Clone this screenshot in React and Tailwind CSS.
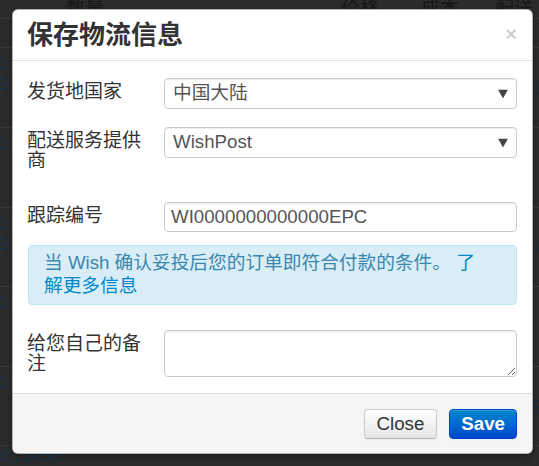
// 保存物流信息 modal over the (dimmed) order table
const rows = [
  { h: "h-[29px]", left: "", right: "" },
  { h: "h-[80px]", left: "01\n9", right: "3" },
  { h: "h-[80px]", left: "01", right: "" },
  { h: "h-[80px]", left: "01\n9", right: "7" },
  { h: "h-[80px]", left: "01", right: "" },
  { h: "h-[79px]", left: "01", right: "9" },
];

function Background() {
  return (
    <div className="flex flex-col bg-[#2b2b2b] h-[466px] w-[539px] overflow-hidden">
      <div className="h-[19px] border-b border-[#3a3a3a] flex items-end text-[19px] leading-[19px] text-[#161616]">
        <span className="ml-[66px]">数量</span>
        <span className="ml-auto">价格</span>
        <span className="ml-[42px]">成本</span>
        <span className="ml-[36px] mr-[6px]">配送</span>
      </div>
      {rows.map((r, i) => (
        <div key={i} className={`${r.h} border-b border-[#3a3a3a] flex justify-between pt-[6px] text-[19px] leading-[20px] text-[#1d3244]`}>
          <span className="whitespace-pre -ml-[2px]">{r.left}</span>
          <span className="mr-[-4px] mt-[24px] text-[#1f2a33]">{r.right}</span>
        </div>
      ))}
      <div className="text-[19px] leading-[20px] text-[#1d3244]">013456</div>
    </div>
  );
}

function Caret() {
  return (
    <svg width="10" height="9" viewBox="0 0 10 9" className="absolute right-[9px] top-1/2 -translate-y-1/2">
      <polygon points="0,0 10,0 5,9" fill="#444" />
    </svg>
  );
}

function Field({ label, children, className = "" }) {
  return (
    <div className={`flex ${className}`}>
      <label className="w-[137px] shrink-0 pr-[12px] pt-[4px] text-[19px] leading-[20px] text-[#333]">
        {label}
      </label>
      <div className="flex-1">{children}</div>
    </div>
  );
}

const control =
  "w-full bg-white border border-[#ccc] rounded-[4px] shadow-[inset_0_1px_1px_rgba(0,0,0,0.075)] text-[18.7px] text-[#555] outline-none";

export default function App() {
  return (
    <div className="relative w-[539px] h-[466px] font-['Liberation_Sans','Noto_Sans_CJK_SC',sans-serif]">
      <Background />

      <div className="absolute left-[12px] top-[9px] w-[521px] bg-white rounded-[6px] border border-black/30 shadow-[0_3px_7px_rgba(0,0,0,0.3)] overflow-hidden">
        {/* header */}
        <div className="h-[51px] flex items-center justify-between pl-[14px] pr-[15px] border-b border-[#e5e5e5]">
          <h3 className="text-[26px] font-bold leading-[30px] text-[#333]">保存物流信息</h3>
          <span className="text-[20px] font-bold leading-none text-black/20 -mt-[2px]">×</span>
        </div>

        {/* body */}
        <div className="pl-[14px] pr-[15px] pt-[17px] pb-[16px]">
          <Field label="发货地国家">
            <div className="relative">
              <select className={`${control} h-[31px] pl-[8px] appearance-none`} defaultValue="cn">
                <option value="cn">中国大陆</option>
              </select>
              <Caret />
            </div>
          </Field>

          <Field label="配送服务提供商" className="mt-[18px]">
            <div className="relative">
              <select className={`${control} h-[31px] pl-[8px] appearance-none`} defaultValue="wp">
                <option value="wp">WishPost</option>
              </select>
              <Caret />
            </div>
          </Field>

          <Field label="跟踪编号" className="mt-[31px]">
            <input className={`${control} h-[30px] px-[6px]`} defaultValue="WI0000000000000EPC" />
          </Field>

          <p className="mt-[13px] h-[60px] ml-[1px] bg-[#d9edf7] border border-[#bce8f1] rounded-[4px] pl-[15px] pr-[33px] pt-[5px] text-[18.7px] leading-[23px] text-[#3a87ad]">
            当 Wish 确认妥投后您的订单即符合付款的条件。 <a className="text-[#0088cc]">了解更多信息</a>
          </p>

          <Field label="给您自己的备注" className="mt-[25px]">
            <textarea className={`${control} h-[47px] px-[6px] py-[4px] block`} />
          </Field>
        </div>

        {/* footer */}
        <div className="bg-[#f5f5f5] border-t border-[#ddd] pt-[15px] pb-[14px] pr-[15px] flex justify-end gap-[12px]">
          <button className="h-[30px] px-[12px] rounded-[4px] border border-[#ccc] border-b-[#b3b3b3] bg-linear-to-b from-white to-[#e6e6e6] text-[18.7px] leading-none text-[#333] shadow-[inset_0_1px_0_rgba(255,255,255,0.2),0_1px_2px_rgba(0,0,0,0.05)]">
            Close
          </button>
          <button className="h-[30px] px-[11px] rounded-[4px] border border-[#0044cc] bg-linear-to-b from-[#0088cc] to-[#0044cc] text-[18.7px] font-bold leading-none text-white shadow-[inset_0_1px_0_rgba(255,255,255,0.2),0_1px_2px_rgba(0,0,0,0.05)]">
            Save
          </button>
        </div>
      </div>
    </div>
  );
}
